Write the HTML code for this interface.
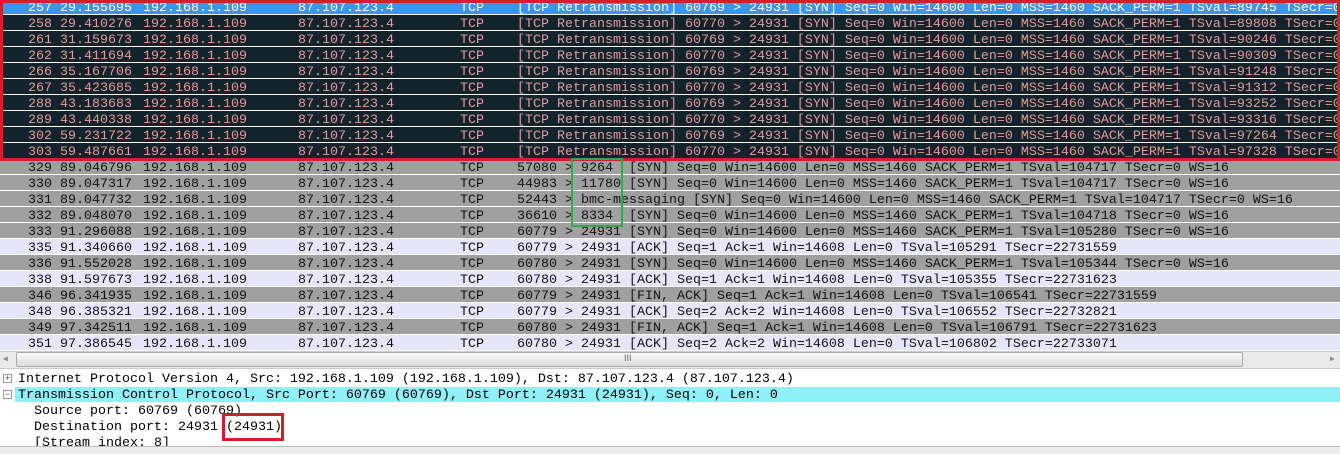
<!DOCTYPE html>
<html><head><style>
body{margin:0;width:1340px;height:453px;overflow:hidden;background:#fff;font-family:"Liberation Mono","DejaVu Sans Mono",monospace;font-size:13.33px;position:relative}
.r{position:absolute;left:0;width:1340px;height:15px;border-bottom:1px solid #fff;white-space:pre;line-height:15px;overflow:hidden}
.r span{position:absolute;top:2px}
.d{background:#12232b;color:#e89a9a}
.s{background:#3d94ef;color:#fff}
.g{background:#a0a0a0;color:#111}
.l{background:#e6e6fa;color:#111}
.box{position:absolute;box-sizing:border-box}
.p{position:absolute;white-space:pre;line-height:16px;color:#000}
</style></head><body>
<div id="rows"></div>
<script>
var R=[
["s","257","29.155695","[TCP Retransmission] 60769 > 24931 [SYN] Seq=0 Win=14600 Len=0 MSS=1460 SACK_PERM=1 TSval=89745 TSecr=0 WS=16"],
["d","258","29.410276","[TCP Retransmission] 60770 > 24931 [SYN] Seq=0 Win=14600 Len=0 MSS=1460 SACK_PERM=1 TSval=89808 TSecr=0 WS=16"],
["d","261","31.159673","[TCP Retransmission] 60769 > 24931 [SYN] Seq=0 Win=14600 Len=0 MSS=1460 SACK_PERM=1 TSval=90246 TSecr=0 WS=16"],
["d","262","31.411694","[TCP Retransmission] 60770 > 24931 [SYN] Seq=0 Win=14600 Len=0 MSS=1460 SACK_PERM=1 TSval=90309 TSecr=0 WS=16"],
["d","266","35.167706","[TCP Retransmission] 60769 > 24931 [SYN] Seq=0 Win=14600 Len=0 MSS=1460 SACK_PERM=1 TSval=91248 TSecr=0 WS=16"],
["d","267","35.423685","[TCP Retransmission] 60770 > 24931 [SYN] Seq=0 Win=14600 Len=0 MSS=1460 SACK_PERM=1 TSval=91312 TSecr=0 WS=16"],
["d","288","43.183683","[TCP Retransmission] 60769 > 24931 [SYN] Seq=0 Win=14600 Len=0 MSS=1460 SACK_PERM=1 TSval=93252 TSecr=0 WS=16"],
["d","289","43.440338","[TCP Retransmission] 60770 > 24931 [SYN] Seq=0 Win=14600 Len=0 MSS=1460 SACK_PERM=1 TSval=93316 TSecr=0 WS=16"],
["d","302","59.231722","[TCP Retransmission] 60769 > 24931 [SYN] Seq=0 Win=14600 Len=0 MSS=1460 SACK_PERM=1 TSval=97264 TSecr=0 WS=16"],
["d","303","59.487661","[TCP Retransmission] 60770 > 24931 [SYN] Seq=0 Win=14600 Len=0 MSS=1460 SACK_PERM=1 TSval=97328 TSecr=0 WS=16"],
["g","329","89.046796","57080 > 9264  [SYN] Seq=0 Win=14600 Len=0 MSS=1460 SACK_PERM=1 TSval=104717 TSecr=0 WS=16"],
["g","330","89.047317","44983 > 11780 [SYN] Seq=0 Win=14600 Len=0 MSS=1460 SACK_PERM=1 TSval=104717 TSecr=0 WS=16"],
["g","331","89.047732","52443 > bmc-messaging [SYN] Seq=0 Win=14600 Len=0 MSS=1460 SACK_PERM=1 TSval=104717 TSecr=0 WS=16"],
["g","332","89.048070","36610 > 8334  [SYN] Seq=0 Win=14600 Len=0 MSS=1460 SACK_PERM=1 TSval=104718 TSecr=0 WS=16"],
["g","333","91.296088","60779 > 24931 [SYN] Seq=0 Win=14600 Len=0 MSS=1460 SACK_PERM=1 TSval=105280 TSecr=0 WS=16"],
["l","335","91.340660","60779 > 24931 [ACK] Seq=1 Ack=1 Win=14608 Len=0 TSval=105291 TSecr=22731559"],
["g","336","91.552028","60780 > 24931 [SYN] Seq=0 Win=14600 Len=0 MSS=1460 SACK_PERM=1 TSval=105344 TSecr=0 WS=16"],
["l","338","91.597673","60780 > 24931 [ACK] Seq=1 Ack=1 Win=14608 Len=0 TSval=105355 TSecr=22731623"],
["g","346","96.341935","60779 > 24931 [FIN, ACK] Seq=1 Ack=1 Win=14608 Len=0 TSval=106541 TSecr=22731559"],
["l","348","96.385321","60779 > 24931 [ACK] Seq=2 Ack=2 Win=14608 Len=0 TSval=106552 TSecr=22732821"],
["g","349","97.342511","60780 > 24931 [FIN, ACK] Seq=1 Ack=1 Win=14608 Len=0 TSval=106791 TSecr=22731623"],
["l","351","97.386545","60780 > 24931 [ACK] Seq=2 Ack=2 Win=14608 Len=0 TSval=106802 TSecr=22733071"]];
var h="";
R.forEach(function(r,i){var t=-1+16*i;
h+='<div class="r '+r[0]+'" style="top:'+t+'px"><span style="left:28px">'+r[1]+'</span><span style="left:60px">'+r[2]+'</span><span style="left:143px">192.168.1.109</span><span style="left:298px">87.107.123.4</span><span style="left:460px">TCP</span><span style="left:517px">'+r[3].replace(/>/g,'&gt;')+'</span></div>';});
document.getElementById("rows").innerHTML=h;
</script>
<div style="position:absolute;top:351px;left:0;width:1340px;height:16px;background:#eaeaea;border-top:1px solid #ccc;border-bottom:1px solid #ccc"></div>
<div style="position:absolute;top:352px;left:16px;width:1225px;height:13px;background:linear-gradient(#fafafa,#dcdcdc);border:1px solid #aaa;border-radius:2px"></div>
<div style="position:absolute;top:353px;left:624px;font-size:9px;color:#666;font-family:'Liberation Sans',sans-serif">III</div>
<div style="position:absolute;top:354px;left:3px;font-size:8px;color:#888">◀</div>
<div style="position:absolute;top:354px;left:1330px;font-size:8px;color:#888">▶</div>
<div style="position:absolute;top:387px;left:15px;width:1325px;height:15px;background:#90f0f8"></div>
<div class="box" style="left:3px;top:374px;width:9px;height:9px;border:1px solid #999;font-size:9px;line-height:7px;text-align:center;color:#555;font-family:'Liberation Sans',sans-serif">+</div>
<div class="box" style="left:3px;top:390px;width:9px;height:9px;border:1px solid #999;font-size:9px;line-height:7px;text-align:center;color:#555;font-family:'Liberation Sans',sans-serif">−</div>
<div class="p" style="left:18px;top:372px">Internet Protocol Version 4, Src: 192.168.1.109 (192.168.1.109), Dst: 87.107.123.4 (87.107.123.4)</div>
<div class="p" style="left:18px;top:388px">Transmission Control Protocol, Src Port: 60769 (60769), Dst Port: 24931 (24931), Seq: 0, Len: 0</div>
<div class="p" style="left:34px;top:404px">Source port: 60769 (60769)</div>
<div class="p" style="left:34px;top:420px">Destination port: 24931 (24931)</div>
<div class="p" style="left:34px;top:436px;height:10px;overflow:hidden">[Stream index: 8]</div>
<div style="position:absolute;top:446px;left:0;width:1340px;height:7px;background:#ececec;border-top:1px solid #bbb"></div>
<div class="box" style="left:0;top:0;width:1340px;height:161px;border:3px solid #d0202c"></div>
<div class="box" style="left:571px;top:158px;width:52px;height:69px;border:2px solid #2eaa4a"></div>
<div class="box" style="left:222px;top:413px;width:62px;height:28px;border:3px solid #d0202c"></div>
</body></html>
